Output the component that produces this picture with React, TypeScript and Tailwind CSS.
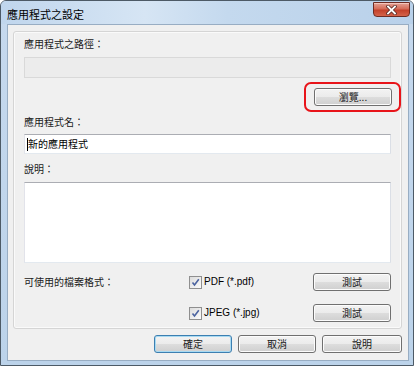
import React from 'react';

const cjk = "font-['Noto_Sans_CJK_TC',sans-serif]";

function WinButton({ label, primary = false, className = '' }: { label: string; primary?: boolean; className?: string }) {
  return (
    <button
      className={`relative flex h-[18px] w-[78px] items-center justify-center rounded-[3px] border text-[10px] leading-none text-[#1a1a1a] ${
        primary
          ? 'border-[#3c7fb1] shadow-[inset_0_0_0_1px_#a8daf2]'
          : 'border-[#707070] shadow-[inset_0_0_0_1px_#fcfcfc]'
      } bg-[linear-gradient(to_bottom,#f3f3f3_0%,#ebebeb_50%,#dddddd_51%,#cfcfcf_100%)] ${className}`}
    >
      {label}
    </button>
  );
}

function CheckBox({ label }: { label: string }) {
  return (
    <div className="flex items-center gap-[2px]">
      <div className="flex h-[13px] w-[13px] items-center justify-center border border-[#8f8f8f] bg-[linear-gradient(135deg,#dcdcdc,#fbfbfb)]">
        <svg width="9" height="9" viewBox="0 0 9 9">
          <path d="M1.5 4.5 L3.5 7 L7.8 1.3" fill="none" stroke="#4b63a0" strokeWidth="1.6" />
        </svg>
      </div>
      <span className="font-['Liberation_Sans',sans-serif] text-[10px] leading-none text-black">{label}</span>
    </div>
  );
}

export default function App() {
  return (
    <div className={`h-[367px] w-[415px] bg-white ${cjk}`}>
      <div className="flex h-[366px] w-[414px] flex-col rounded-t-[6px] border border-[#4d5a66] bg-[linear-gradient(to_bottom,#c6d9ee,#bcd3ea)]">
        {/* Title bar */}
        <div className="flex h-[23px] items-start justify-between rounded-t-[5px] bg-[linear-gradient(to_right,#c0d6ed_0%,#d6e5f4_35%,#c4d9ee_55%,#b9d1ea_100%)] pl-[6px] pr-[3px]">
          <span className="mt-[6px] text-[11px] leading-[14px] text-black">應用程式之設定</span>
          <div className="mt-[1px] flex h-[15px] w-[37px] items-center justify-center rounded-b-[4px] border border-[#6d2b22] bg-[linear-gradient(to_bottom,#e4a396_0%,#d56b58_45%,#c3412b_55%,#d4634a_100%)] shadow-[inset_0_1px_0_#f3c5bb]">
            <svg width="11" height="10" viewBox="0 0 11 10">
              <path d="M2 1.5 L9 8.5 M9 1.5 L2 8.5" stroke="#5a2a24" strokeWidth="3.4" strokeLinecap="square" />
              <path d="M2 1.5 L9 8.5 M9 1.5 L2 8.5" stroke="#ffffff" strokeWidth="1.8" strokeLinecap="square" />
            </svg>
          </div>
        </div>

        {/* Client area */}
        <div className="ml-[6px] flex h-[337px] w-[402px] flex-col border border-[#98adc3] bg-[#f0f0f0] px-[5px] pt-[6px]">
          {/* Group panel */}
          <div className="flex h-[298px] w-[389px] flex-col rounded-[3px] border border-[#d5d5d5] px-[10px] shadow-[inset_0_0_0_1px_#fafafa]">
            <div className="mt-[5px] text-[10px] leading-[14px] text-[#1a1a1a]">應用程式之路徑：</div>
            <div className="mt-[6px] h-[21px] w-[367px] border border-[#d9d9d9] bg-[#ececec]" />

            <div className="-mr-[10px] mt-[4px] flex justify-end">
              <div className="rounded-[7px] border-2 border-[#e8141a] py-[4px] pl-[8px] pr-[7px]">
                <WinButton label="瀏覽..." className="h-[17px]" />
              </div>
            </div>

            <div className="mt-[3px] text-[10px] leading-[14px] text-[#1a1a1a]">應用程式名：</div>
            <div className="mt-[5px] flex h-[20px] w-[367px] items-center border border-[#abadb3] border-l-[#e2e3ea] border-r-[#dbdfe6] border-b-[#e3e9ef] bg-white pl-[2px]">
              <span className="h-[13px] w-px bg-black" />
              <span className="text-[10px] leading-none text-black">新的應用程式</span>
            </div>

            <div className="mt-[8px] text-[10px] leading-[14px] text-[#1a1a1a]">說明：</div>
            <div className="mt-[6px] h-[81px] w-[367px] border border-[#abadb3] border-l-[#e2e3ea] border-r-[#dbdfe6] border-b-[#e3e9ef] bg-white" />

            <div className="mt-[10px] grid grid-cols-[165px_124px_78px]">
              <div className="self-center text-[10px] leading-[14px] text-[#1a1a1a]">可使用的檔案格式：</div>
              <div className="self-center">
                <CheckBox label="PDF (*.pdf)" />
              </div>
              <WinButton label="測試" className="h-[17px]" />

              <div />
              <div className="mt-[13px] self-center">
                <CheckBox label="JPEG (*.jpg)" />
              </div>
              <WinButton label="測試" className="mt-[13px] h-[17px]" />
            </div>
          </div>

          {/* Dialog buttons */}
          <div className="mt-[6px] flex justify-end gap-[6px] pr-[1px]">
            <WinButton label="確定" primary className="w-[77px]" />
            <WinButton label="取消" />
            <WinButton label="說明" className="w-[80px]" />
          </div>
        </div>
      </div>
    </div>
  );
}
